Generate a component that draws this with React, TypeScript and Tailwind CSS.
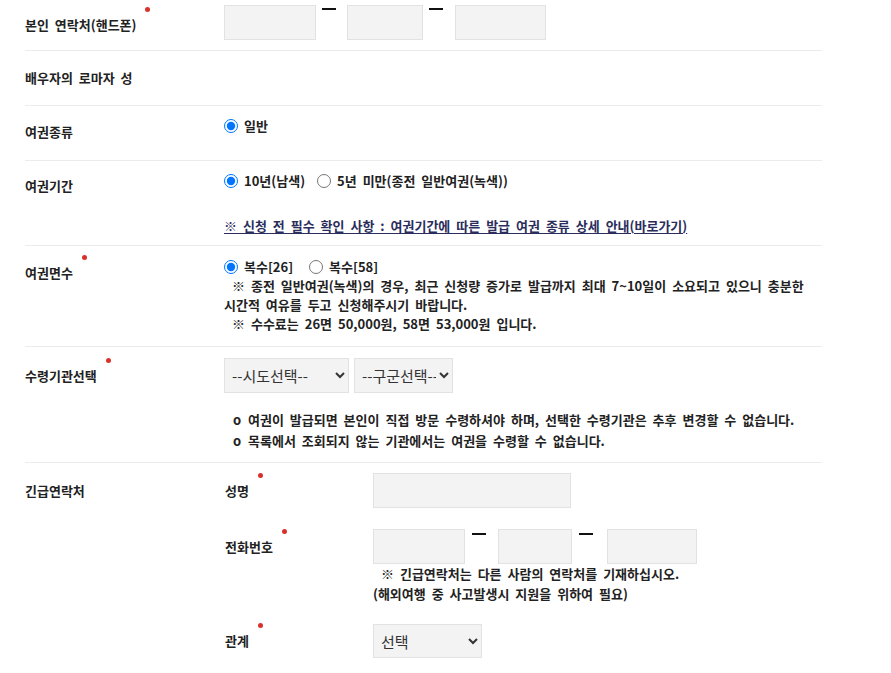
import React from "react"

const font = "font-['Noto_Sans_CJK_KR','Noto_Sans',sans-serif]"

// red "required" dot placed top-right of a label
function Req({ children }: { children: React.ReactNode }) {
  return (
    <span className="relative inline-block">
      {children}
      <span className="absolute left-[calc(100%+9px)] top-[-8px] h-[5px] w-[5px] rounded-full bg-[#d9312c]" />
    </span>
  )
}

function Box({ w }: { w: string }) {
  return <input type="text" className={`h-[35px] border border-[#e2e2e2] bg-[#f3f3f3] ${w}`} />
}

function Dash({ cls }: { cls: string }) {
  return <span className={`mt-[3px] block h-[2px] w-[14px] bg-[#111] ${cls}`} />
}

function Radio({ name, checked, label, cls = "" }: { name: string; checked?: boolean; label: string; cls?: string }) {
  return (
    <label className={`inline-flex items-center ${cls}`}>
      <input type="radio" name={name} defaultChecked={checked} className="m-0 h-[14px] w-[14px]" />
      <span className="ml-[6px]">{label}</span>
    </label>
  )
}

export default function App() {
  return (
    <div className={`min-h-screen bg-white text-[13px] font-semibold text-[#222] [word-spacing:3px] ${font}`}>
      <div className="ml-[25px] w-[797px]">
        {/* 본인 연락처 */}
        <div className="flex border-b border-[#ececec]">
          <div className="w-[199px] shrink-0 pt-[15px] leading-5">
            <Req>본인 연락처(핸드폰)</Req>
          </div>
          <div className="flex items-start pt-[5px] pb-[10px]">
            <Box w="w-[92px]" />
            <Dash cls="ml-[6px] mr-[11px]" />
            <Box w="w-[76px]" />
            <Dash cls="ml-[6px] mr-[12px]" />
            <Box w="w-[91px]" />
          </div>
        </div>

        <div className="flex border-b border-[#ececec]">
          <div className="w-[199px] shrink-0 pt-[17px] pb-[17px] leading-5">배우자의 로마자 성</div>
        </div>

        <div className="flex border-b border-[#ececec]">
          <div className="w-[199px] shrink-0 pt-[16px] pb-[18px] leading-5">여권종류</div>
          <div className="pt-[10px] leading-5">
            <Radio name="kind" checked label="일반" />
          </div>
        </div>

        <div className="flex border-b border-[#ececec]">
          <div className="w-[199px] shrink-0 pt-[15px] leading-5">여권기간</div>
          <div className="pt-[10px] pb-[9px] leading-5">
            <div className="flex">
              <Radio name="period" checked label="10년(남색)" />
              <Radio name="period" label="5년 미만(종전 일반여권(녹색))" cls="ml-[12px]" />
            </div>
            <a href="#" className="mt-[25px] block text-[#2b2d5c] underline underline-offset-2">
              ※ 신청 전 필수 확인 사항 : 여권기간에 따른 발급 여권 종류 상세 안내(바로가기)
            </a>
          </div>
        </div>

        <div className="flex border-b border-[#ececec]">
          <div className="w-[199px] shrink-0 pt-[17px] leading-5">
            <Req>여권면수</Req>
          </div>
          <div className="pt-[11px] pb-[13px] leading-[19px]">
            <div className="flex">
              <Radio name="pages" checked label="복수[26]" />
              <Radio name="pages" label="복수[58]" cls="ml-[16px]" />
            </div>
            <p className="pl-[8px]">
              ※ 종전 일반여권(녹색)의 경우, 최근 신청량 증가로 발급까지 최대 7~10일이 소요되고 있으니 충분한
            </p>
            <p>시간적 여유를 두고 신청해주시기 바랍니다.</p>
            <p className="pl-[8px]">※ 수수료는 26면 50,000원, 58면 53,000원 입니다.</p>
          </div>
        </div>

        <div className="flex border-b border-[#ececec]">
          <div className="w-[199px] shrink-0 pt-[19px] leading-5">
            <Req>수령기관선택</Req>
          </div>
          <div className="pt-[11px] pb-[11px]">
            <div className="flex gap-[5px]">
              <select className="h-[35px] w-[125px] border border-[#e2e2e2] bg-[#f3f3f3] pl-[3px] text-[15px] font-normal text-[#333]">
                <option>--시도선택--</option>
              </select>
              <select className="h-[35px] w-[99px] border border-[#e2e2e2] bg-[#f3f3f3] pl-[3px] text-[15px] font-normal text-[#333]">
                <option>--구군선택--</option>
              </select>
            </div>
            <div className="mt-[16px] pl-[9px] leading-[21px]">
              <p>
                <span className="inline-block w-[15px]">o</span>여권이 발급되면 본인이 직접 방문 수령하셔야 하며, 선택한 수령기관은 추후 변경할 수 없습니다.
              </p>
              <p>
                <span className="inline-block w-[15px]">o</span>목록에서 조회되지 않는 기관에서는 여권을 수령할 수 없습니다.
              </p>
            </div>
          </div>
        </div>

        {/* 긴급연락처 */}
        <div className="flex">
          <div className="w-[199px] shrink-0 pt-[18px] leading-5">긴급연락처</div>
          <div className="pt-[10px] pb-[20px] leading-5">
            <div className="flex items-center">
              <div className="w-[149px] shrink-0 pl-[1px]">
                <Req>성명</Req>
              </div>
              <Box w="w-[198px]" />
            </div>

            <div className="mt-[21px] flex">
              <div className="flex h-[35px] w-[149px] shrink-0 items-center pl-[1px]">
                <Req>전화번호</Req>
              </div>
              <div>
                <div className="flex items-start">
                  <Box w="w-[92px]" />
                  <Dash cls="mt-[4px] ml-[7px] mr-[12px]" />
                  <Box w="w-[74px]" />
                  <Dash cls="mt-[4px] ml-[7px] mr-[14px]" />
                  <Box w="w-[90px]" />
                </div>
                <p className="pl-[8px] leading-[19.5px]">※ 긴급연락처는 다른 사람의 연락처를 기재하십시오.</p>
                <p className="leading-[19.5px]">(해외여행 중 사고발생시 지원을 위하여 필요)</p>
              </div>
            </div>

            <div className="mt-[21px] flex items-center">
              <div className="w-[149px] shrink-0 pl-[1px]">
                <Req>관계</Req>
              </div>
              <select className="h-[34px] w-[109px] border border-[#e2e2e2] bg-[#f3f3f3] pl-[3px] text-[15px] font-normal text-[#333]">
                <option>선택</option>
              </select>
            </div>
          </div>
        </div>
      </div>
    </div>
  )
}
